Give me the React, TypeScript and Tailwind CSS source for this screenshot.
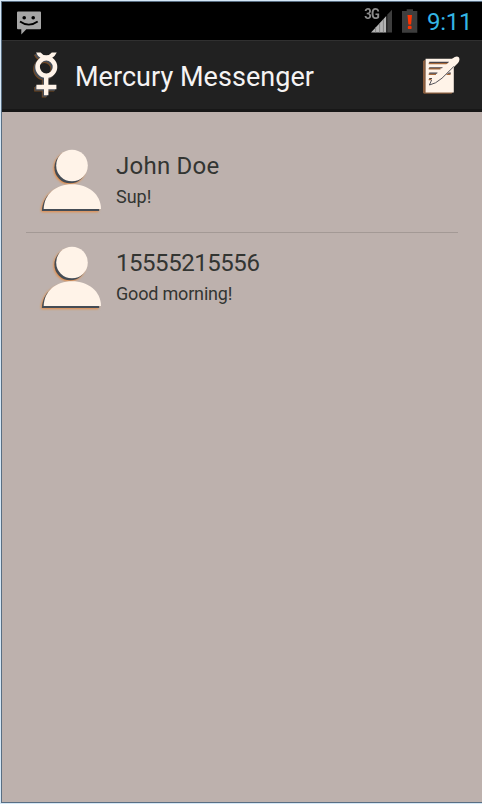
import React from "react";

const contacts = [
  { name: "John Doe", message: "Sup!", nameTracking: "tracking-[0.25px]", msgTracking: "tracking-[0px]" },
  { name: "15555215556", message: "Good morning!", nameTracking: "tracking-[-0.45px]", msgTracking: "tracking-[-0.18px]" },
];

function ChatIcon() {
  return (
    <svg width="24" height="24" viewBox="0 0 24 24">
      <path d="M1 0.5H23Q24 0.5 24 1.5V17.2Q24 18.2 23 18.2H9.3L4.3 23.5V18.2H1Q0 18.2 0 17.2V1.5Q0 0.5 1 0.5Z" fill="#a6a6a6" />
      <circle cx="7.2" cy="6.7" r="1.8" fill="#000" />
      <circle cx="16.2" cy="6.7" r="1.8" fill="#000" />
      <path d="M3 10.5Q11.8 16.8 20.7 10.5" fill="none" stroke="#000" strokeWidth="1.9" />
    </svg>
  );
}

function SignalIcon() {
  return (
    <svg width="22" height="24" viewBox="0 0 22 24">
      <path d="M0 23.5L15.5 6.7V23.5Z" fill="#b4b4b4" />
      <path d="M16 6L21 0.7V23.5H16Z" fill="#3e3e3e" />
      <path d="M4.6 18V23.5M8.6 14V23.5M12.4 10V23.5" stroke="#777" strokeWidth="0.8" />
      <path d="M15.8 6V23.5" stroke="#000" strokeWidth="0.8" />
    </svg>
  );
}

function BatteryIcon() {
  return (
    <svg width="16" height="24" viewBox="0 0 16 24">
      <path d="M4.7 0.3H11V2H15.3V23.7H0V2H4.7Z" fill="#3e3e3e" />
      <path d="M5.5 6H10L9.1 15.6H6.4Z" fill="#ff3300" />
      <rect x="5.8" y="16.7" width="3.8" height="3.4" rx="1.2" fill="#ff3300" />
    </svg>
  );
}

function MercuryShape() {
  return (
    <>
      <path d="M5 1.5H9.6Q11.4 4.2 15.2 4.2Q19 4.2 20.8 1.5H25.8Q24.2 5.4 20 7.4H10.4Q6.5 5.4 5 1.5Z" stroke="none" fill="currentColor" />
      <circle cx="15.3" cy="16" r="8.7" fill="none" stroke="currentColor" strokeWidth="4.6" />
      <path d="M15.2 25V44.3M5.4 36H25.4" fill="none" stroke="currentColor" strokeWidth="4.4" />
    </>
  );
}

function MercuryIcon() {
  return (
    <svg width="30" height="48" viewBox="0 0 30 48">
      <g transform="translate(-2.2 2.3)" color="#87501f" opacity="0.85"><MercuryShape /></g>
      <g transform="translate(-1.4 1.5)" color="#474d57"><MercuryShape /></g>
      <g color="#fff3e8"><MercuryShape /></g>
    </svg>
  );
}

function ComposeIcon() {
  return (
    <svg width="38" height="39" viewBox="0 0 38 39">
      <path d="M1 5L3.5 3.6L4 36H31L29.5 37.8H2L1 36.8Z" fill="#895c3d" />
      <path d="M3.6 2.8H31.8V36.4H3.6Z" fill="#fff3e8" />
      <path d="M6.7 7.5H26M6.7 12.8H18.5M6.7 18.2H14M6.7 23.6H9.5M21.5 18.2H28.5" stroke="#a86b3c" strokeWidth="1.4" />
      <path d="M7.2 6.4H27M7.2 11.7H20.5M7.2 17.1H15.5M7.2 22.5H10M22.5 17.1H28.8" stroke="#47434a" strokeWidth="1.1" />
      <path d="M7.5 29L10.5 22.3L30.5 2.6Q34.5 -0.8 37 1.5Q38.2 4.2 36 7L20.5 22.5L13 27Z" fill="#fff3e8" />
      <path d="M9.6 24L7.4 29L13.5 26.8L20 22.2L31.8 10.5" fill="none" stroke="#55535a" strokeWidth="1" />
    </svg>
  );
}

function PersonShape() {
  return (
    <>
      <circle cx="36" cy="19.5" r="15.8" />
      <path d="M7.7 63C8 48 20 38.2 36 38.2S65 48 65 63Z" />
    </>
  );
}

function PersonIcon({ id }: { id: string }) {
  return (
    <svg width="70" height="72" viewBox="0 0 70 72">
      <defs>
        <filter id={id} x="-15%" y="-15%" width="130%" height="130%">
          <feGaussianBlur stdDeviation="1.1" />
        </filter>
      </defs>
      <g transform="translate(-2.5 2.8)" fill="#ed8530" filter={`url(#${id})`}><PersonShape /></g>
      <g transform="translate(-1.8 2)" fill="#454c55"><PersonShape /></g>
      <g fill="#fff3e8"><PersonShape /></g>
    </svg>
  );
}

export default function App() {
  return (
    <div className="h-[804px] w-[482px] overflow-hidden bg-[#d5e8f7] pt-px pb-px pl-px font-['Roboto','Liberation_Sans',sans-serif]">
      <div className="flex h-[802px] flex-col border-t border-b border-l border-[#596e83] bg-[#bdb1ad]">
        <div className="flex h-[38px] shrink-0 items-start bg-black pr-[9px] pl-[15px]">
          <div className="mt-[9px]"><ChatIcon /></div>
          <span className="mt-[4px] ml-auto scale-y-115 text-[13px] leading-[16px] font-bold tracking-[-0.8px] text-[#8c8c8c]">3G</span>
          <div className="mt-[7px] -ml-[8px]"><SignalIcon /></div>
          <div className="mt-[7px] ml-[9px]"><BatteryIcon /></div>
          <span className="mt-[4px] ml-[9px] w-[46px] text-[24px] leading-[32px] tracking-[-0.25px] whitespace-nowrap text-[#33b5e5]">9:11</span>
        </div>
        <header className="flex h-[72px] shrink-0 items-start border-t border-b-[3px] border-t-[#303030] border-b-[#171717] bg-[#212121] pr-[22px] pl-[29px]">
          <div className="mt-[10px]"><MercuryIcon /></div>
          <h1 className="mt-[20px] ml-[14px] text-[27px] leading-[32px] tracking-[0.04px] whitespace-nowrap text-[#f5f3f3]">Mercury Messenger</h1>
          <div className="mt-[15px] ml-auto"><ComposeIcon /></div>
        </header>
        <main className="flex flex-col pt-[24px] pr-[24px] pl-[24px]">
          {contacts.map((c, i) => (
            <div key={c.name} className={i === 0 ? "flex h-[97px] border-b border-[#a39995]" : "flex h-[97px]"}>
              <div className="mt-[10px] ml-[10px] shrink-0"><PersonIcon id={`glow-${i}`} /></div>
              <div className="ml-[10px] flex flex-col pt-[15px] text-[#333532]">
                <span className={`text-[24px] leading-[30px] whitespace-nowrap ${c.nameTracking}`}>{c.name}</span>
                <span className={`mt-[4px] text-[18px] leading-[24px] whitespace-nowrap ${c.msgTracking}`}>{c.message}</span>
              </div>
            </div>
          ))}
        </main>
      </div>
    </div>
  );
}
